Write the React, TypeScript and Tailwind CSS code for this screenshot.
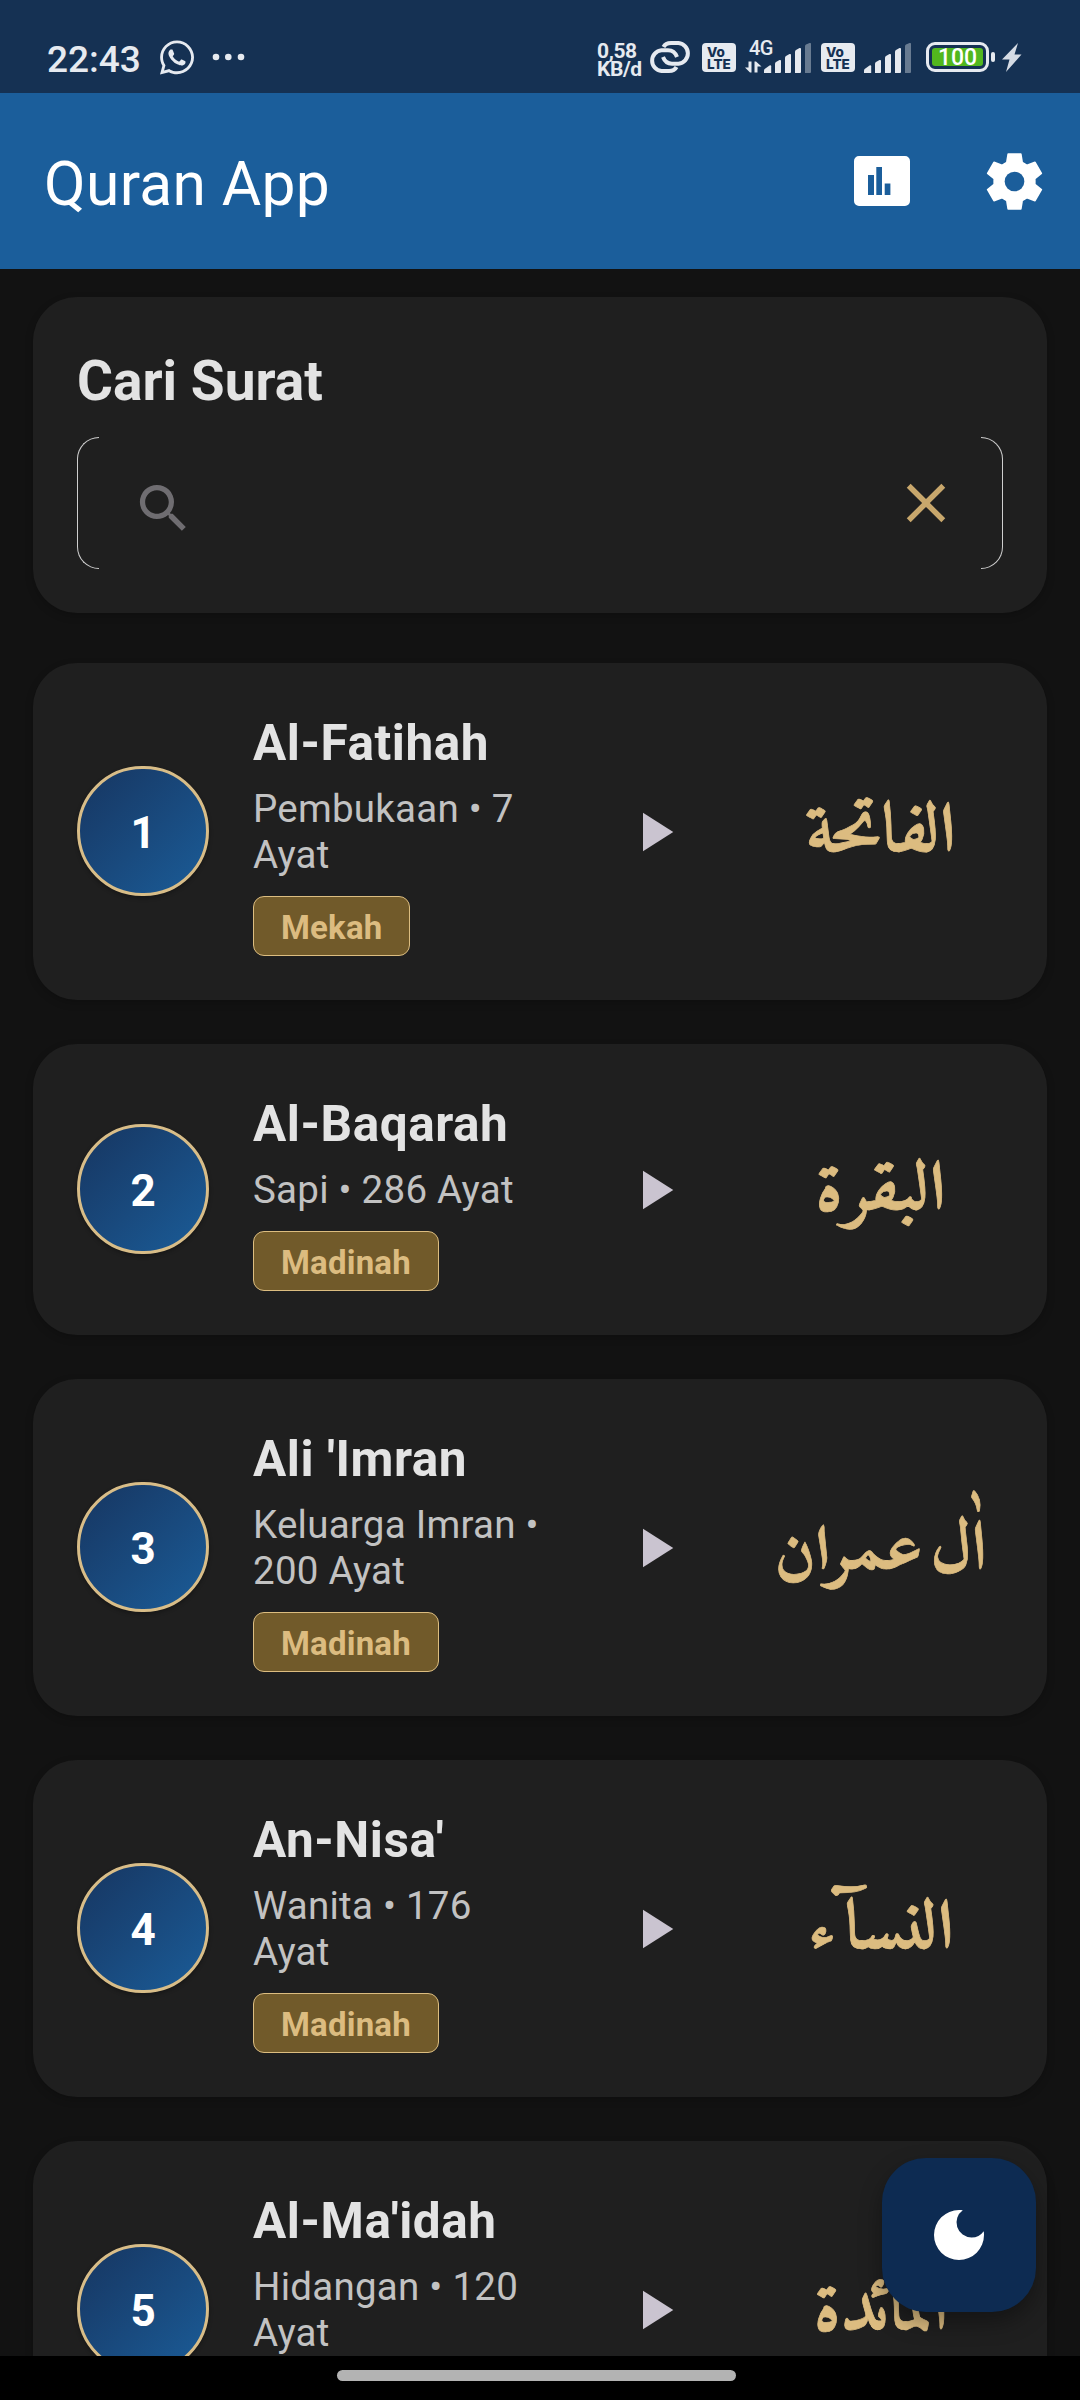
import type { ReactNode } from "react";
import { FaWhatsapp } from "react-icons/fa";

type Surah = {
  no: number;
  name: string;
  info: string;
  place: string;
  arabic: ReactNode;
  arabicClass: string;
};

const surahs: Surah[] = [
  { no: 1, name: "Al-Fatihah", info: "Pembukaan • 7 Ayat", place: "Mekah", arabic: "الفاتحة", arabicClass: "text-[69px] scale-x-[1.08]" },
  { no: 2, name: "Al-Baqarah", info: "Sapi • 286 Ayat", place: "Madinah", arabic: "البقرة", arabicClass: "text-[69px] scale-x-[1.1]" },
  {
    no: 3,
    name: "Ali 'Imran",
    info: "Keluarga Imran • 200 Ayat",
    place: "Madinah",
    arabic: (
      <>
        اٰل <span className="text-[64px] font-['Scheherazade_New']">عمران</span>
      </>
    ),
    arabicClass: "text-[69px] [word-spacing:-12px]",
  },
  { no: 4, name: "An-Nisa'", info: "Wanita • 176 Ayat", place: "Madinah", arabic: "النسآء", arabicClass: "text-[69px] scale-x-[1.11]" },
  { no: 5, name: "Al-Ma'idah", info: "Hidangan • 120 Ayat", place: "Madinah", arabic: "المائدة", arabicClass: "text-[69px] scale-x-[1.07]" },
];

function VoLte() {
  return (
    <div className="flex h-[29px] w-[34px] flex-col items-start justify-center rounded-[4px] bg-[#e6eaf0] pl-[5px] text-[13.500px] font-extrabold leading-[12px] text-[#153153] font-[Inter]">
      <span>Vo</span>
      <span>LTE</span>
    </div>
  );
}

function Signal() {
  return (
    <svg className="h-[30px] w-[49px]" viewBox="0 0 49 30" fill="#e6eaf0">
      <path d="M0 30v-2.5q0-1 1-1.8L5.5 22.6q1.7-.8 1.7 1V30z" />
      <path d="M11 30V20.5q0-1 1-1.6l3.5-1.8q1.5-.7 1.5 1V29q0 1-1 1z" />
      <path d="M21 30V14.5q0-1 1-1.6l3.5-1.8q1.5-.7 1.5 1V29q0 1-1 1z" />
      <path d="M31 30V8.500q0-1 1-1.600l3.500-1.800q1.500-.7 1.500 1V29q0 1-1 1z" />
      <path opacity=".4" d="M41 30V3.200q0-1 1-1.600l3.500-1.500q1.500-.5 1.500 1V29q0 1-1 1z" />
    </svg>
  );
}

function StatusBar() {
  return (
    <div className="flex h-[93px] shrink-0 items-start bg-[#153153] pl-[47px] pt-[40px] text-[#e6eaf0]">
      <span className="mt-[1px] w-[113px] text-[37px] font-medium leading-[37px]">22:43</span>
      <FaWhatsapp className="-mt-[2px] h-[39px] w-[34px]" />
      <svg className="ml-[18px] mt-[13px] h-[8px] w-[33px]" viewBox="0 0 33 8" fill="currentColor">
        <circle cx="4" cy="4" r="3.300" />
        <circle cx="16.300" cy="4" r="3.300" />
        <circle cx="29" cy="4" r="3.300" />
      </svg>
      <div className="ml-[352px] flex w-[52px] flex-col text-[21px] font-bold leading-[18px] tracking-[-0.4px]">
        <span className="mt-[2px]">0,58</span>
        <span>KB/d</span>
      </div>
      <svg className="mt-[1px] h-[32px] w-[42px]" viewBox="0 0 42 32" fill="none" stroke="currentColor" strokeWidth="4">
        <path d="M14.500 6Q16.500 2 22 2h7.500a10.400 10.400 0 0 1 0 20.700h-6.500q-6.500 0-9-6.700" />
        <path d="M27.500 26q-2 4-7.500 4h-7.500a10.400 10.400 0 0 1 0-20.700h6.500q6.500 0 9 6.700" />
      </svg>
      <div className="ml-[11px] mt-[3px]"><VoLte /></div>
      <div className="ml-[9px] flex h-[33px] w-[19px] flex-col">
        <span className="ml-[4px] text-[20px] font-medium leading-[17px] tracking-[-0.5px]">4G</span>
        <svg className="mt-[4px] h-[12px] w-[17px]" viewBox="0 0 17 12" fill="currentColor">
          <path d="M0 6.500h3.500V.5h3V11.500H5zM9.500 11.500V.5h1.500l5.500 5H12.500v6z" />
        </svg>
      </div>
      <div className="mt-[3px]"><Signal /></div>
      <div className="ml-[8px] mt-[3px]"><VoLte /></div>
      <div className="ml-[9px] mt-[3px]"><Signal /></div>
      <div className="ml-[13px] mt-[2px] flex h-[30px] w-[63px] rounded-[9px] border-[3px] border-[#e6eaf0] p-[3px]">
        <div className="flex flex-1 items-center justify-center rounded-[3px] bg-[#52b71e] pt-[2px] text-[23px] font-medium leading-[20px] text-white">100</div>
      </div>
      <div className="ml-[2px] mt-[12px] h-[10px] w-[4px] rounded-[2px] bg-[#e6eaf0]" />
      <svg className="ml-[7px] mt-[3px] h-[29px] w-[20px]" viewBox="0 0 20 29" fill="#d5dbe4">
        <path d="M16 0 0 16.500h7.500L4 29 19.500 11.500h-7z" />
      </svg>
    </div>
  );
}

/* Six-toothed gear outline, built by rotating one tooth around the centre. */
const gearPoints = Array.from({ length: 6 }, (_, i) => {
  const a = (i * Math.PI) / 3;
  return [[-23, -57], [-19, -82], [19, -82], [23, -57]]
    .map(([x, y]) => `${(x * Math.cos(a) - y * Math.sin(a)).toFixed(1)},${(x * Math.sin(a) + y * Math.cos(a)).toFixed(1)}`)
    .join(" ");
}).join(" ");

function AppBar() {
  return (
    <header className="flex h-[176px] shrink-0 items-center bg-[#1b5e9b] pl-[44px] pr-[37px] text-white">
      <h1 className="mt-[7px] text-[60.500px] leading-[72px] tracking-[0.35px]">Quran App</h1>
      <svg className="ml-auto h-[50px] w-[56px]" viewBox="0 0 56 50">
        <path fill="#fff" fillRule="evenodd" d="M5 0h46a5 5 0 0 1 5 5v40a5 5 0 0 1-5 5H5a5 5 0 0 1-5-5V5a5 5 0 0 1 5-5zM14 19v20h6V19zM22.300 11v28h5.700V11zM30.700 27.500v11.500h5.700V27.500z" />
      </svg>
      <svg className="ml-[76px] h-[57px] w-[57px]" viewBox="-85.500 -85.500 171 171">
        <polygon points={gearPoints} fill="#fff" stroke="#fff" strokeWidth="5" strokeLinejoin="round" />
        <circle r="29.500" fill="#1b5e9b" />
      </svg>
    </header>
  );
}

function SearchCard() {
  return (
    <section className="h-[316px] shrink-0 rounded-[44px] bg-[#1f1f1f] px-[44px] pt-[44px] shadow-[0_3px_8px_rgba(0,0,0,0.2)]">
      <h2 className="h-[96px] text-[55px] font-bold leading-[80px] text-[#e3e3e3]">Cari Surat</h2>
      <div className="flex h-[132px] items-center">
        <div className="h-full w-[22px] rounded-l-[22px] border border-r-0 border-[#cfcfcf]" />
        <svg className="ml-[33px] mt-[11px] h-[63px] w-[63px] text-[#6f6d71]" viewBox="0 0 24 24" fill="currentColor">
          <path d="M15.500 14h-.79l-.28-.27A6.471 6.471 0 0 0 16 9.500 6.500 6.500 0 1 0 9.500 16c1.610 0 3.090-.59 4.230-1.570l.27.28v.79l5 4.990L20.490 19l-4.990-5zm-6 0C7.010 14 5 11.990 5 9.500S7.010 5 9.500 5 14 7.010 14 9.500 11.990 14 9.500 14z" />
        </svg>
        <svg className="ml-auto h-[66px] w-[66px] text-[#c8a76c]" viewBox="0 0 24 24" fill="currentColor">
          <path d="M19 6.410L17.590 5 12 10.590 6.410 5 5 6.410 10.590 12 5 17.590 6.410 19 12 13.410 17.590 19 19 17.590 13.410 12z" />
        </svg>
        <div className="ml-[22px] h-full w-[22px] rounded-r-[22px] border border-l-0 border-[#cfcfcf]" />
      </div>
    </section>
  );
}

function SurahCard({ s }: { s: Surah }) {
  return (
    <article className="flex shrink-0 items-center rounded-[44px] bg-[#1f1f1f] p-[44px] shadow-[0_3px_8px_rgba(0,0,0,0.2)]">
      <div className="mb-[2px] flex h-[130px] w-[132px] shrink-0 items-center justify-center rounded-full border-[3px] border-[#d8bd88] bg-linear-to-br from-[#163560] to-[#1a5d99] bg-origin-border text-[44px] font-bold leading-none text-white shadow-[0_2px_4px_rgba(0,0,0,0.3)]">
        <span className="mt-[4px]">{s.no}</span>
      </div>
      <div className="ml-[44px] flex w-[292px] flex-col items-start">
        <h3 className="text-[49.500px] font-bold leading-[72px] tracking-[0.55px] whitespace-nowrap text-[#e3e3e3]">{s.name}</h3>
        <p className="mt-[7px] text-[38.500px] leading-[46px] tracking-[0.25px] text-[#c2c2c2]">{s.info}</p>
        <span className="mt-[18px] flex h-[60px] items-center rounded-[11px] border border-[#dcbd80] bg-[#715a2a] px-[27px] pt-[3px] text-[33px] font-bold tracking-[0.2px] text-[#dcbc80]">{s.place}</span>
      </div>
      <svg className="ml-[76px] h-[66px] w-[66px] shrink-0" viewBox="0 0 24 24" fill="#cac4d0">
        <path d="M8 5v14l11-7z" />
      </svg>
      <div className="ml-auto flex h-[132px] w-[244px] items-center justify-center pt-[5px]">
        <span dir="rtl" lang="ar" className={"inline-block font-[Amiri] font-bold leading-[100px] whitespace-nowrap text-[#dcbc80] [-webkit-text-stroke:0.7px_#dcbc80] " + s.arabicClass}>{s.arabic}</span>
      </div>
    </article>
  );
}

export default function App() {
  return (
    <div className="relative flex h-[2400px] w-[1080px] flex-col overflow-hidden bg-[#121212] font-[Roboto,sans-serif]">
      <StatusBar />
      <AppBar />
      <main className="flex min-h-0 flex-1 flex-col overflow-hidden px-[33px] pt-[28px]">
        <SearchCard />
        <div className="mt-[50px] flex shrink-0 flex-col gap-[44px]">
          {surahs.map((s) => (
            <SurahCard key={s.no} s={s} />
          ))}
        </div>
      </main>
      <button className="absolute right-[44px] bottom-[88px] flex h-[154px] w-[154px] items-center justify-center rounded-[44px] bg-[#0d2b52] shadow-[0_10px_22px_rgba(0,0,0,0.35)]">
        <svg className="h-[50px] w-[50px]" viewBox="3 3 18 18" fill="#fff">
          <path d="M12 3a9 9 0 1 0 9 9c0-.46-.04-.92-.1-1.360a5.389 5.389 0 0 1-4.400 2.260 5.403 5.403 0 0 1-3.140-9.800c-.44-.06-.9-.1-1.360-.1z" />
        </svg>
      </button>
      <footer className="flex h-[44px] shrink-0 bg-black pt-[14px] pl-[337px]">
        <div className="h-[11px] w-[399px] rounded-full bg-[#b3b3b3]" />
      </footer>
    </div>
  );
}
